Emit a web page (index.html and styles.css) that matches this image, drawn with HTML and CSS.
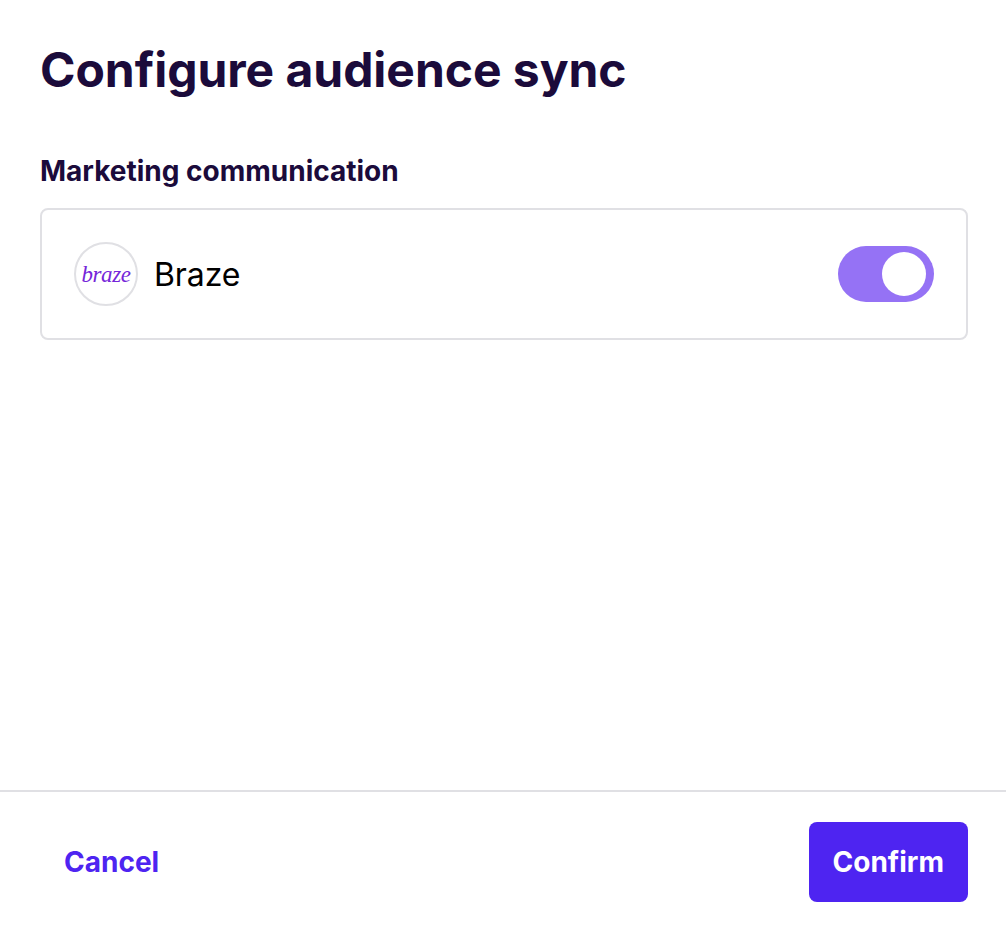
FILE: index.html
```html
<!DOCTYPE html>
<html lang="en">
<head>
  <meta charset="UTF-8">
  <title>Configure audience sync</title>
  <meta name="viewport" content="width=device-width, initial-scale=1">
  <link rel="stylesheet" href="styles.css">
</head>
<body>

  <div class="modal">
    <div class="content">
      <h1>Configure audience sync</h1>
      <h2>Marketing communication</h2>
      <div class="card">
        <div class="logo"><span class="logo-text">braze</span></div>
        <span class="name">Braze</span>
        <div class="toggle"><div class="knob"></div></div>
      </div>
    </div>

    <div class="footer">
      <button class="btn-cancel">Cancel</button>
      <button class="btn-confirm">Confirm</button>
    </div>
  </div>

</body>
</html>
```

FILE: styles.css
```css
* {
  box-sizing: border-box;
}

html, body {
  height: 100%;
}

body {
  margin: 0;
  font-family: 'Inter', sans-serif;
  background-color: #ffffff;
  color: #1b0b3b;
}

.modal {
  height: 928px;
  display: flex;
  flex-direction: column;
}

.content {
  flex: 1;
  padding: 40px 38px 0 40px;
}

h1 {
  margin: 0 0 54px;
  font-size: 48px;
  line-height: 60px;
  font-weight: 700;
  letter-spacing: -0.04px;
}

h2 {
  margin: 0 0 20px;
  font-size: 28px;
  line-height: 34px;
  font-weight: 700;
}

.card {
  height: 132px;
  display: flex;
  align-items: center;
  padding: 0 32px;
  border: 2px solid #e0e0e4;
  border-radius: 8px;
}

.logo {
  width: 64px;
  height: 64px;
  display: flex;
  align-items: center;
  justify-content: center;
  border: 2px solid #e0e0e4;
  border-radius: 50%;
}

.logo-text {
  font-family: 'Liberation Serif', serif;
  font-style: italic;
  font-size: 23px;
  line-height: 23px;
  letter-spacing: -0.4px;
  color: #7526d9;
}

.name {
  flex: 1;
  margin-left: 16px;
  font-size: 32px;
  letter-spacing: -0.1px;
  color: #000000;
}

.toggle {
  width: 96px;
  height: 56px;
  display: flex;
  align-items: center;
  justify-content: flex-end;
  padding-right: 8px;
  background-color: #9572f5;
  border-radius: 28px;
}

.knob {
  width: 44px;
  height: 44px;
  background-color: #ffffff;
  border-radius: 50%;
}

.footer {
  height: 138px;
  display: flex;
  align-items: flex-start;
  justify-content: space-between;
  padding: 30px 38px 0 40px;
  border-top: 2px solid #e0e0e4;
}

button {
  height: 80px;
  padding: 0 24px;
  font-family: 'Inter', sans-serif;
  font-size: 28px;
  font-weight: 700;
  border: none;
  border-radius: 8px;
  cursor: pointer;
}

.btn-cancel {
  background-color: transparent;
  color: #4e24f1;
}

.btn-confirm {
  background-color: #4e24f1;
  color: #ffffff;
}
```
